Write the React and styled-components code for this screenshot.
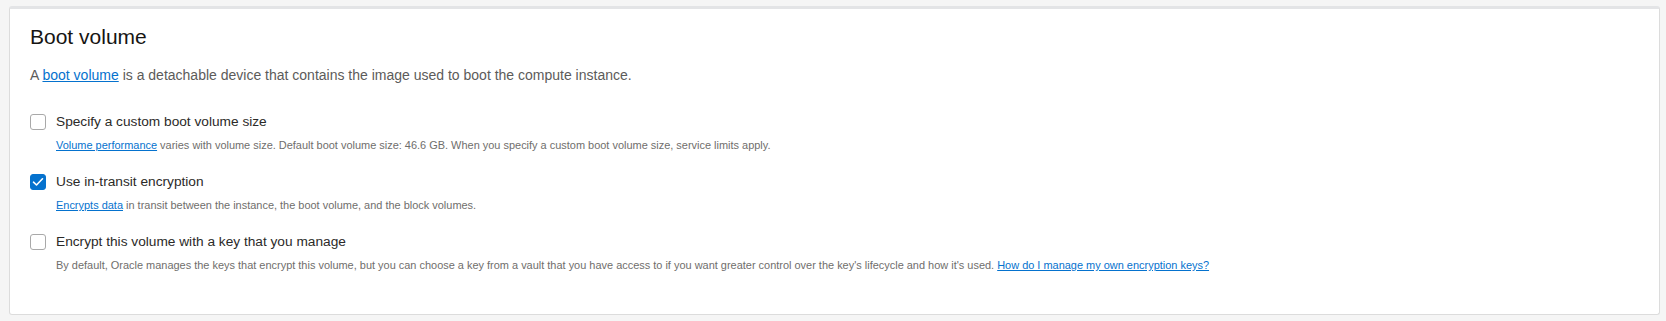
import React from "react";
import styled, { createGlobalStyle } from "styled-components";

const GlobalStyle = createGlobalStyle`
  html, body {
    margin: 0;
    padding: 0;
    background: #f5f5f5;
    font-family: "Liberation Sans", Arial, sans-serif;
  }
`;

const Page = styled.div`
  padding: 6px 6px 6px 9px;
`;

const Card = styled.section`
  background: #fff;
  border: 1px solid #dcdcdc;
  border-top: 3px solid #e3e4e6;
  border-radius: 3px;
  padding: 15px 20px 41px 20px;
`;

const Title = styled.h2`
  margin: 0;
  font-size: 21px;
  line-height: 26px;
  font-weight: 400;
  color: #161513;
`;

const Intro = styled.p`
  margin: 15px 0 0;
  font-size: 14px;
  line-height: 20px;
  color: #5c5b5a;
`;

const Link = styled.a`
  color: #0572ce;
  text-decoration: underline;
  cursor: pointer;
`;

const Options = styled.div`
  display: flex;
  flex-direction: column;
  gap: 19px;
  margin-top: 27px;
`;

const Option = styled.div`
  display: grid;
  grid-template-columns: 16px 1fr;
  column-gap: 10px;
  row-gap: 5px;
  align-items: center;
`;

const Box = styled.span`
  width: 16px;
  height: 16px;
  box-sizing: border-box;
  border-radius: 3px;
  border: 1px solid ${(p) => (p.checked ? "#0572ce" : "#a9a9a9")};
  background: ${(p) => (p.checked ? "#0572ce" : "#fff")};
  display: flex;
  align-items: center;
  justify-content: center;
`;

const Label = styled.label`
  font-size: 13.7px;
  line-height: 20px;
  color: #2b2a28;
`;

const Help = styled.div`
  grid-column: 2;
  font-size: 10.96px;
  line-height: 16px;
  color: #6f6e6c;
`;

const Check = () => (
  <svg width="12" height="10" viewBox="0 0 12 10" fill="none">
    <path d="M1.5 5.2 L4.5 8 L10.5 1.8" stroke="#fff" strokeWidth="1.6" strokeLinecap="round" strokeLinejoin="round" />
  </svg>
);

const options = [
  {
    label: "Specify a custom boot volume size",
    link: "Volume performance",
    help: " varies with volume size. Default boot volume size: 46.6 GB. When you specify a custom boot volume size, service limits apply.",
  },
  {
    label: "Use in-transit encryption",
    checked: true,
    link: "Encrypts data",
    help: " in transit between the instance, the boot volume, and the block volumes.",
  },
  {
    label: "Encrypt this volume with a key that you manage",
    help: "By default, Oracle manages the keys that encrypt this volume, but you can choose a key from a vault that you have access to if you want greater control over the key's lifecycle and how it's used. ",
    trailLink: "How do I manage my own encryption keys?",
  },
];

export default function App() {
  return (
    <Page>
      <GlobalStyle />
      <Card>
        <Title>Boot volume</Title>
        <Intro>
          A <Link>boot volume</Link> is a detachable device that contains the image used to boot the compute instance.
        </Intro>
        <Options>
          {options.map((o) => (
            <Option key={o.label}>
              <Box checked={o.checked}>{o.checked && <Check />}</Box>
              <Label>{o.label}</Label>
              <Help>
                {o.link && <Link>{o.link}</Link>}
                {o.help}
                {o.trailLink && <Link>{o.trailLink}</Link>}
              </Help>
            </Option>
          ))}
        </Options>
      </Card>
    </Page>
  );
}
